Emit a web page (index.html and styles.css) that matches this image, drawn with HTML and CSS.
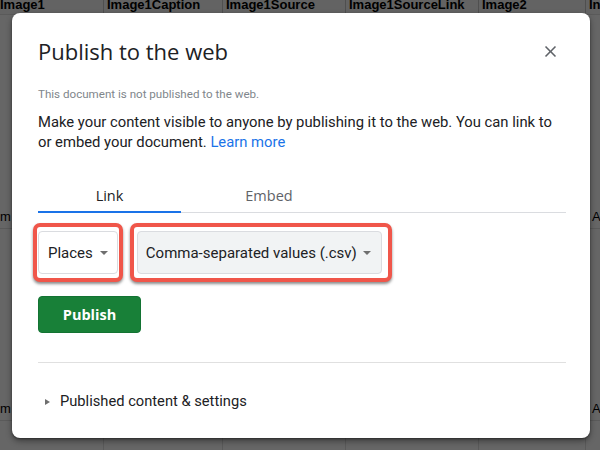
FILE: index.html
```html
<!DOCTYPE html>
<html>
<head>
<meta charset="utf-8">
<title>Publish to the web</title>
<link rel="stylesheet" href="styles.css">
</head>
<body>
<div class="sheet">
  <div class="srow shead">
    <div class="cell c1">Image1</div>
    <div class="cell c2">Image1Caption</div>
    <div class="cell c3">Image1Source</div>
    <div class="cell c4">Image1SourceLink</div>
    <div class="cell c5">Image2</div>
    <div class="cell c6">In</div>
  </div>
  <div class="srow r1">
    <div class="cell c1">m</div>
    <div class="cell c2"></div>
    <div class="cell c3"></div>
    <div class="cell c4"></div>
    <div class="cell c5"></div>
    <div class="cell c6 cr">Ar</div>
  </div>
  <div class="srow r2">
    <div class="cell c1">m</div>
    <div class="cell c2"></div>
    <div class="cell c3"></div>
    <div class="cell c4"></div>
    <div class="cell c5"></div>
    <div class="cell c6 cr">Ar</div>
  </div>
  <div class="srow r3">
    <div class="cell c1"></div>
    <div class="cell c2"></div>
    <div class="cell c3"></div>
    <div class="cell c4"></div>
    <div class="cell c5"></div>
    <div class="cell c6"></div>
  </div>
</div>

<div class="dialog">
  <div class="titlebar">
    <h1 class="title">Publish to the web</h1>
    <svg class="close" viewBox="0 0 24 24" width="19" height="19" aria-label="Close">
      <path d="M19 6.41L17.59 5 12 10.59 6.41 5 5 6.41 10.59 12 5 17.59 6.41 19 12 13.41 17.59 19 19 17.59 13.41 12z"/>
    </svg>
  </div>
  <p class="status">This document is not published to the web.</p>
  <p class="desc">Make your content visible to anyone by publishing it to the web. You can link to<br>or embed your document. <a class="link">Learn more</a></p>

  <div class="tabs">
    <div class="tab tab-link active">Link</div>
    <div class="tab tab-embed">Embed</div>
  </div>

  <div class="selects">
    <div class="mark m1">
      <div class="dd dd1"><span>Places</span><span class="caret"></span></div>
    </div>
    <div class="mark m2">
      <div class="dd dd2"><span>Comma-separated values (.csv)</span><span class="caret"></span></div>
    </div>
  </div>

  <button class="publish">Publish</button>

  <div class="divider"></div>

  <div class="expander">
    <span class="tri"></span>
    <span class="exp-text">Published content &amp; settings</span>
  </div>
</div>
</body>
</html>
```

FILE: styles.css
```css
* {
  box-sizing: border-box;
  margin: 0;
  padding: 0;
}

html, body {
  width: 600px;
  height: 450px;
  overflow: hidden;
}

body {
  background: #666666;
  font-family: Roboto, "Liberation Sans", sans-serif;
  position: relative;
}

/* background spreadsheet */
.sheet {
  display: flex;
  flex-direction: column;
  margin-top: -5px;
  height: 455px;
  font-family: "Liberation Sans", Arial, sans-serif;
  font-size: 13px;
  line-height: 15px;
  color: #000;
}

.srow {
  display: flex;
  border-bottom: 1px solid #5a5a5a;
}

.shead {
  height: 20px;
  background: #636363;
  font-weight: bold;
}

.shead .cell {
  align-items: center;
  padding-bottom: 0;
  border-right-color: #4f4f4f;
}

.r1 { height: 214px; }
.r2 { height: 192px; }
.r3 { flex: 1; border-bottom: none; }

.cell {
  display: flex;
  align-items: flex-end;
  padding: 0 3px 4px 3px;
  border-right: 1px solid #5a5a5a;
  white-space: nowrap;
  overflow: hidden;
}

.c1 { width: 104px; padding-left: 0; }
.c2 { width: 119px; }
.c3 { width: 123px; }
.c4 { width: 133px; }
.c5 { width: 107px; }
.c6 { flex: 1; border-right: none; }
.cr { padding-left: 6px; }

/* dialog */
.dialog {
  position: absolute;
  left: 12px;
  top: 13px;
  width: 578px;
  height: 425px;
  background: #fff;
  border-radius: 8px;
  box-shadow: 0 3px 6px rgba(0, 0, 0, 0.4), 0 1px 2px rgba(0, 0, 0, 0.35);
  padding: 24px 24px 0 26px;
  display: flex;
  flex-direction: column;
}

.titlebar {
  display: flex;
  align-items: center;
  justify-content: space-between;
  height: 28px;
}

.title {
  font-family: "Open Sans", Roboto, sans-serif;
  font-weight: 400;
  font-size: 22px;
  line-height: 28px;
  color: #202124;
}

.close {
  fill: #5f6368;
  margin-right: 6px;
}

.status {
  margin-top: 21px;
  font-size: 11.6px;
  line-height: 16px;
  color: #80868b;
}

.desc {
  margin-top: 10px;
  font-size: 14.8px;
  line-height: 20px;
  color: #202124;
  white-space: nowrap;
}

.link {
  color: #1a73e8;
  text-decoration: none;
}

.tabs {
  display: flex;
  margin-top: 34px;
  border-bottom: 1px solid #dadce0;
}

.tab {
  font-family: "Open Sans", Roboto, sans-serif;
  font-weight: 500;
  font-size: 14.5px;
  line-height: 20px;
  padding-bottom: 5px;
  border-bottom: 2px solid transparent;
  margin-bottom: -1px;
  text-align: center;
  color: #5f6368;
}

.tab-link { width: 143px; }
.tab-embed { width: 176px; }

.tab.active {
  color: #202124;
  border-bottom-color: #1a73e8;
}

.selects {
  display: flex;
  gap: 7px;
  margin-top: 10px;
  margin-left: -5px;
}

.mark {
  border: 4px solid #f0564a;
  border-radius: 7px;
  box-shadow: 0 2px 3px rgba(0, 0, 0, 0.45);
  background: #fff;
}

.m1 { padding: 4px 1px 4px 1px; }
.m2 { padding: 4px 6px 4px 3px; }

.dd {
  display: flex;
  align-items: center;
  height: 43px;
  border: 1px solid #dadce0;
  border-radius: 4px;
  font-size: 15px;
  color: #202124;
  white-space: nowrap;
}

.dd1 {
  gap: 7px;
  padding: 0 9px;
  background: #fff;
}

.dd2 {
  gap: 6px;
  padding: 0 10px 0 8px;
  background: #f1f3f4;
}

.caret {
  width: 0;
  height: 0;
  border-left: 4px solid transparent;
  border-right: 4px solid transparent;
  border-top: 4px solid #6f6f6f;
}

.publish {
  align-self: flex-start;
  margin-top: 14px;
  width: 103px;
  height: 37px;
  background: #188038;
  border: 1px solid #137333;
  border-radius: 4px;
  color: #fff;
  font-family: "Open Sans", Roboto, sans-serif;
  font-weight: 700;
  font-size: 14.5px;
}

.divider {
  margin-top: 29px;
  height: 1px;
  background: #e0e0e0;
}

.expander {
  display: flex;
  align-items: center;
  margin-top: 28px;
  height: 20px;
}

.tri {
  width: 0;
  height: 0;
  margin-left: 7px;
  margin-top: 2px;
  border-left: 5px solid #6f6f6f;
  border-top: 3.5px solid transparent;
  border-bottom: 3.5px solid transparent;
}

.exp-text {
  margin-left: 10px;
  font-size: 14.7px;
  line-height: 20px;
  color: #202124;
}
```
